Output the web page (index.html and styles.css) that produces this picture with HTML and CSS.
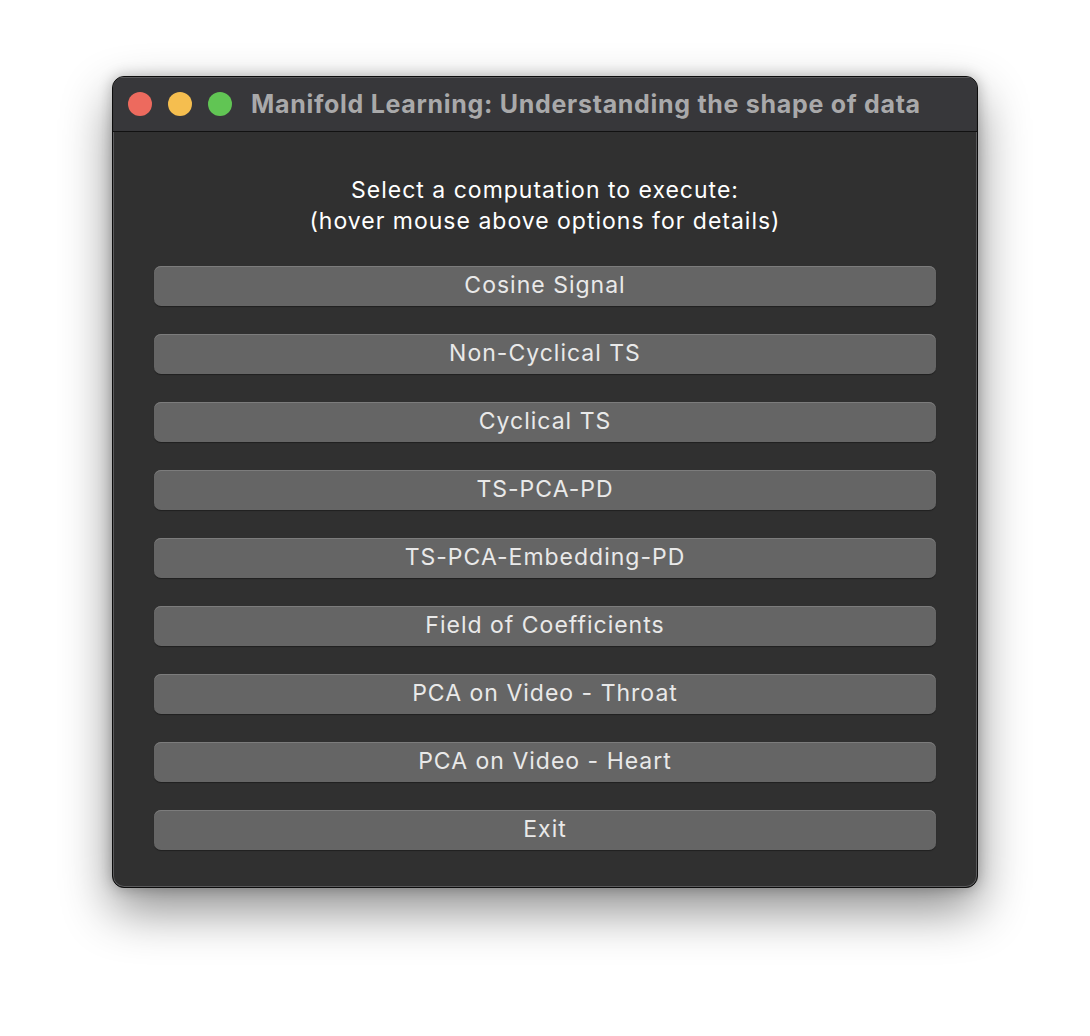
FILE: index.html
```html
<!DOCTYPE html>
<html>
<head>
<meta charset="utf-8">
<link rel="stylesheet" href="styles.css">
</head>
<body>
<div class="window">
  <div class="titlebar">
    <div class="lights">
      <span class="light red"></span>
      <span class="light yellow"></span>
      <span class="light green"></span>
    </div>
    <div class="title">Manifold Learning: Understanding the shape of data</div>
  </div>
  <div class="content">
    <div class="heading">Select a computation to execute:<br>(hover mouse above options for details)</div>
    <div class="buttons">
      <div class="btn">Cosine Signal</div>
      <div class="btn">Non-Cyclical TS</div>
      <div class="btn">Cyclical TS</div>
      <div class="btn">TS-PCA-PD</div>
      <div class="btn">TS-PCA-Embedding-PD</div>
      <div class="btn">Field of Coefficients</div>
      <div class="btn">PCA on Video - Throat</div>
      <div class="btn">PCA on Video - Heart</div>
      <div class="btn">Exit</div>
    </div>
  </div>
</div>
</body>
</html>
```

FILE: styles.css
```css
html, body {
  margin: 0;
  padding: 0;
  background: #ffffff;
}
body {
  width: 1090px;
  height: 1036px;
  overflow: hidden;
  font-family: Inter, "Noto Sans", sans-serif;
}
.window {
  margin: 76px 0 0 112px;
  width: 866px;
  height: 812px;
  box-sizing: border-box;
  border-radius: 12px;
  background: #303030;
  border: 1px solid #0c0c0c;
  box-shadow: inset 0 0 0 1px #5a5a5c, 0 22px 50px rgba(0,0,0,0.45), 0 0 14px rgba(0,0,0,0.25);
  overflow: hidden;
  display: flex;
  flex-direction: column;
}
.titlebar {
  height: 54px;
  background: #37373a;
  border-bottom: 1px solid #111;
  box-shadow: inset 0 1px 0 #5a5a5c;
  display: flex;
  align-items: center;
  padding-left: 15px;
  flex-shrink: 0;
}
.lights {
  display: flex;
  gap: 16px;
}
.light {
  width: 24px;
  height: 24px;
  border-radius: 50%;
  display: block;
}
.red { background: #ed6a5e; }
.yellow { background: #f5be4f; }
.green { background: #61c554; }
.title {
  margin-left: 19px;
  color: #a9a9aa;
  font-size: 25px;
  font-weight: 700;
  letter-spacing: 0.7px;
  padding-bottom: 1px;
}
.content {
  padding: 43px 41px 0 41px;
  display: flex;
  flex-direction: column;
}
.heading {
  text-align: center;
  color: #ffffff;
  font-size: 23px;
  line-height: 31px;
  letter-spacing: 1px;
  margin-bottom: 29px;
}
.buttons {
  display: flex;
  flex-direction: column;
  gap: 28px;
}
.btn {
  height: 40px;
  box-sizing: border-box;
  background: #656565;
  border-radius: 7px;
  box-shadow: inset 0 1px 0 #7c7c7c, 0 1px 1px rgba(0,0,0,0.35);
  color: #e9e9e9;
  font-size: 23px;
  letter-spacing: 1px;
  display: flex;
  align-items: center;
  justify-content: center;
  padding-bottom: 2px;
}
```
